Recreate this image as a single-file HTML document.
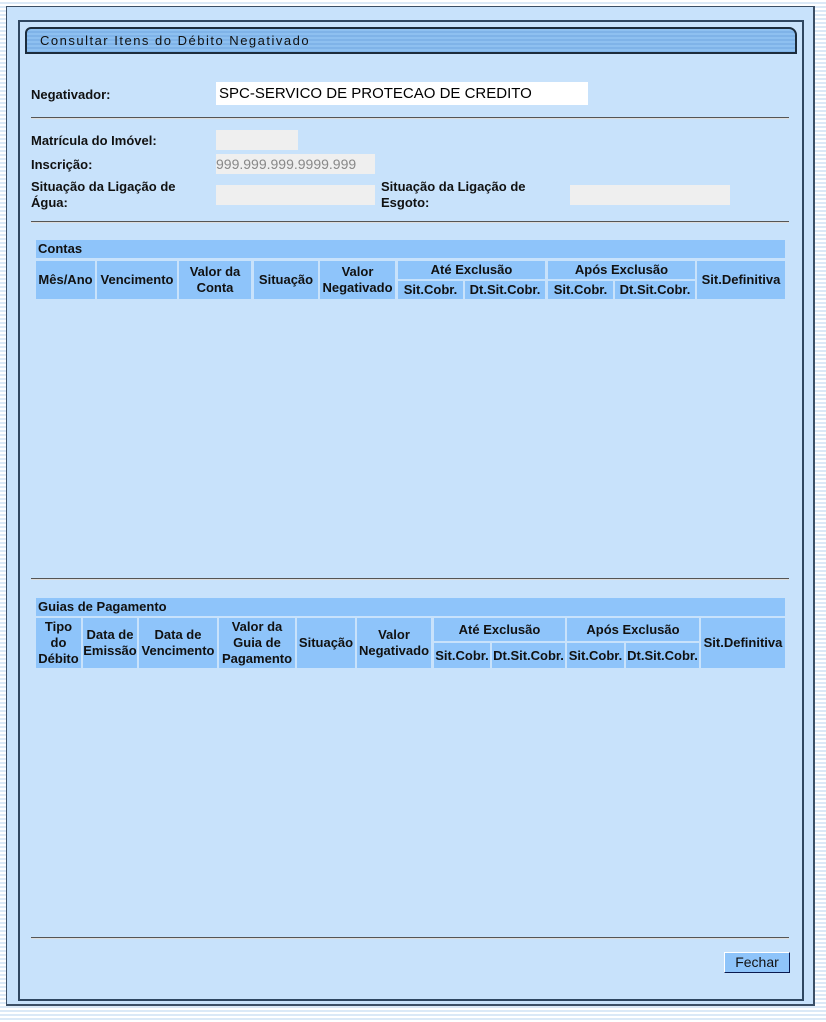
<!DOCTYPE html>
<html><head><meta charset="utf-8"><style>
body{margin:0;width:826px;height:1022px;position:relative;overflow:hidden;font-family:"Liberation Sans",Arial,sans-serif;
background:repeating-linear-gradient(to bottom,#ffffff 0,#ffffff 2px,#dbe9f7 2px,#dbe9f7 4px);}
.a{position:absolute;}
.outer{left:6px;top:6px;width:806px;height:997px;border:2px solid #3b4f66;border-left-width:1px;border-top-width:1px;background:#c8e2fb;}
.inner{left:18px;top:20px;width:782px;height:977px;border:2px solid #2e4660;background:#c8e2fb;}
.tab{left:25px;top:27px;width:772px;height:27px;box-sizing:border-box;border:2px solid #1c2c3c;border-radius:6px 8px 0 0;
background:repeating-linear-gradient(to bottom,#8ec0f0 0,#8ec0f0 2px,#7fb3e8 2px,#7fb3e8 4px);font-size:13px;letter-spacing:1.5px;color:#111;line-height:23px;padding-left:13px}
.l{font-size:13px;font-weight:bold;color:#111;}
.hr{left:31px;width:758px;height:1px;background:#555;border-bottom:1px solid #ddd}
.f{background:#efefef;}
.c{position:absolute;background:#8ec4fa;display:flex;align-items:center;justify-content:center;text-align:center;font-size:13px;font-weight:bold;color:#111;line-height:16px}
</style></head><body>
<div class="a outer"></div>
<div class="a inner"></div>
<div class="a tab">Consultar Itens do Débito Negativado</div>

<div class="a l" style="left:31px;top:87px">Negativador:</div>
<div class="a" style="left:216px;top:82px;width:372px;height:23px;background:#fff;font-size:15px;line-height:24px;padding-left:3px;box-sizing:border-box;color:#000">SPC-SERVICO DE PROTECAO DE CREDITO</div>
<div class="a hr" style="top:117px"></div>

<div class="a l" style="left:31px;top:133px">Matrícula do Imóvel:</div>
<div class="a f" style="left:216px;top:130px;width:82px;height:20px"></div>
<div class="a l" style="left:31px;top:157px">Inscrição:</div>
<div class="a f" style="left:216px;top:154px;width:159px;height:20px;font-size:14px;color:#888;line-height:20px">999.999.999.9999.999</div>
<div class="a l" style="left:31px;top:179px;line-height:16px">Situação da Ligação de<br>Água:</div>
<div class="a f" style="left:216px;top:185px;width:159px;height:20px"></div>
<div class="a l" style="left:381px;top:179px;line-height:16px">Situação da Ligação de<br>Esgoto:</div>
<div class="a f" style="left:570px;top:185px;width:160px;height:20px"></div>
<div class="a hr" style="top:221px"></div>

<div class="c" style="left:36px;top:240px;width:749px;height:18px;justify-content:flex-start;padding-left:2px;box-sizing:border-box">Contas</div>
<div class="c" style="left:36px;top:261px;width:59px;height:38px">Mês/Ano</div>
<div class="c" style="left:97px;top:261px;width:80px;height:38px">Vencimento</div>
<div class="c" style="left:179px;top:261px;width:72px;height:38px">Valor da<br>Conta</div>
<div class="c" style="left:254px;top:261px;width:64px;height:38px">Situação</div>
<div class="c" style="left:320px;top:261px;width:75px;height:38px">Valor<br>Negativado</div>
<div class="c" style="left:398px;top:261px;width:147px;height:18px">Até Exclusão</div>
<div class="c" style="left:398px;top:281px;width:65px;height:18px">Sit.Cobr.</div>
<div class="c" style="left:465px;top:281px;width:80px;height:18px">Dt.Sit.Cobr.</div>
<div class="c" style="left:548px;top:261px;width:147px;height:18px">Após Exclusão</div>
<div class="c" style="left:548px;top:281px;width:65px;height:18px">Sit.Cobr.</div>
<div class="c" style="left:615px;top:281px;width:80px;height:18px">Dt.Sit.Cobr.</div>
<div class="c" style="left:697px;top:261px;width:88px;height:38px">Sit.Definitiva</div>

<div class="a hr" style="top:578px"></div>

<div class="c" style="left:36px;top:598px;width:749px;height:18px;justify-content:flex-start;padding-left:2px;box-sizing:border-box">Guias de Pagamento</div>
<div class="c" style="left:36px;top:618px;width:45px;height:50px">Tipo<br>do<br>Débito</div>
<div class="c" style="left:83px;top:618px;width:54px;height:50px">Data de<br>Emissão</div>
<div class="c" style="left:139px;top:618px;width:78px;height:50px">Data de<br>Vencimento</div>
<div class="c" style="left:219px;top:618px;width:76px;height:50px">Valor da<br>Guia de<br>Pagamento</div>
<div class="c" style="left:297px;top:618px;width:58px;height:50px">Situação</div>
<div class="c" style="left:357px;top:618px;width:74px;height:50px">Valor<br>Negativado</div>
<div class="c" style="left:434px;top:618px;width:131px;height:23px">Até Exclusão</div>
<div class="c" style="left:434px;top:643px;width:56px;height:25px">Sit.Cobr.</div>
<div class="c" style="left:492px;top:643px;width:73px;height:25px">Dt.Sit.Cobr.</div>
<div class="c" style="left:567px;top:618px;width:132px;height:23px">Após Exclusão</div>
<div class="c" style="left:567px;top:643px;width:57px;height:25px">Sit.Cobr.</div>
<div class="c" style="left:626px;top:643px;width:73px;height:25px">Dt.Sit.Cobr.</div>
<div class="c" style="left:701px;top:618px;width:84px;height:50px">Sit.Definitiva</div>

<div class="a hr" style="top:937px"></div>
<div class="a" style="left:724px;top:952px;width:66px;height:21px;box-sizing:border-box;background:#8ec4fa;border:1px solid;border-color:#fff #0a1a50 #0a1a50 #fff;font-size:14px;text-align:center;line-height:19px;color:#111">Fechar</div>
</body></html>
